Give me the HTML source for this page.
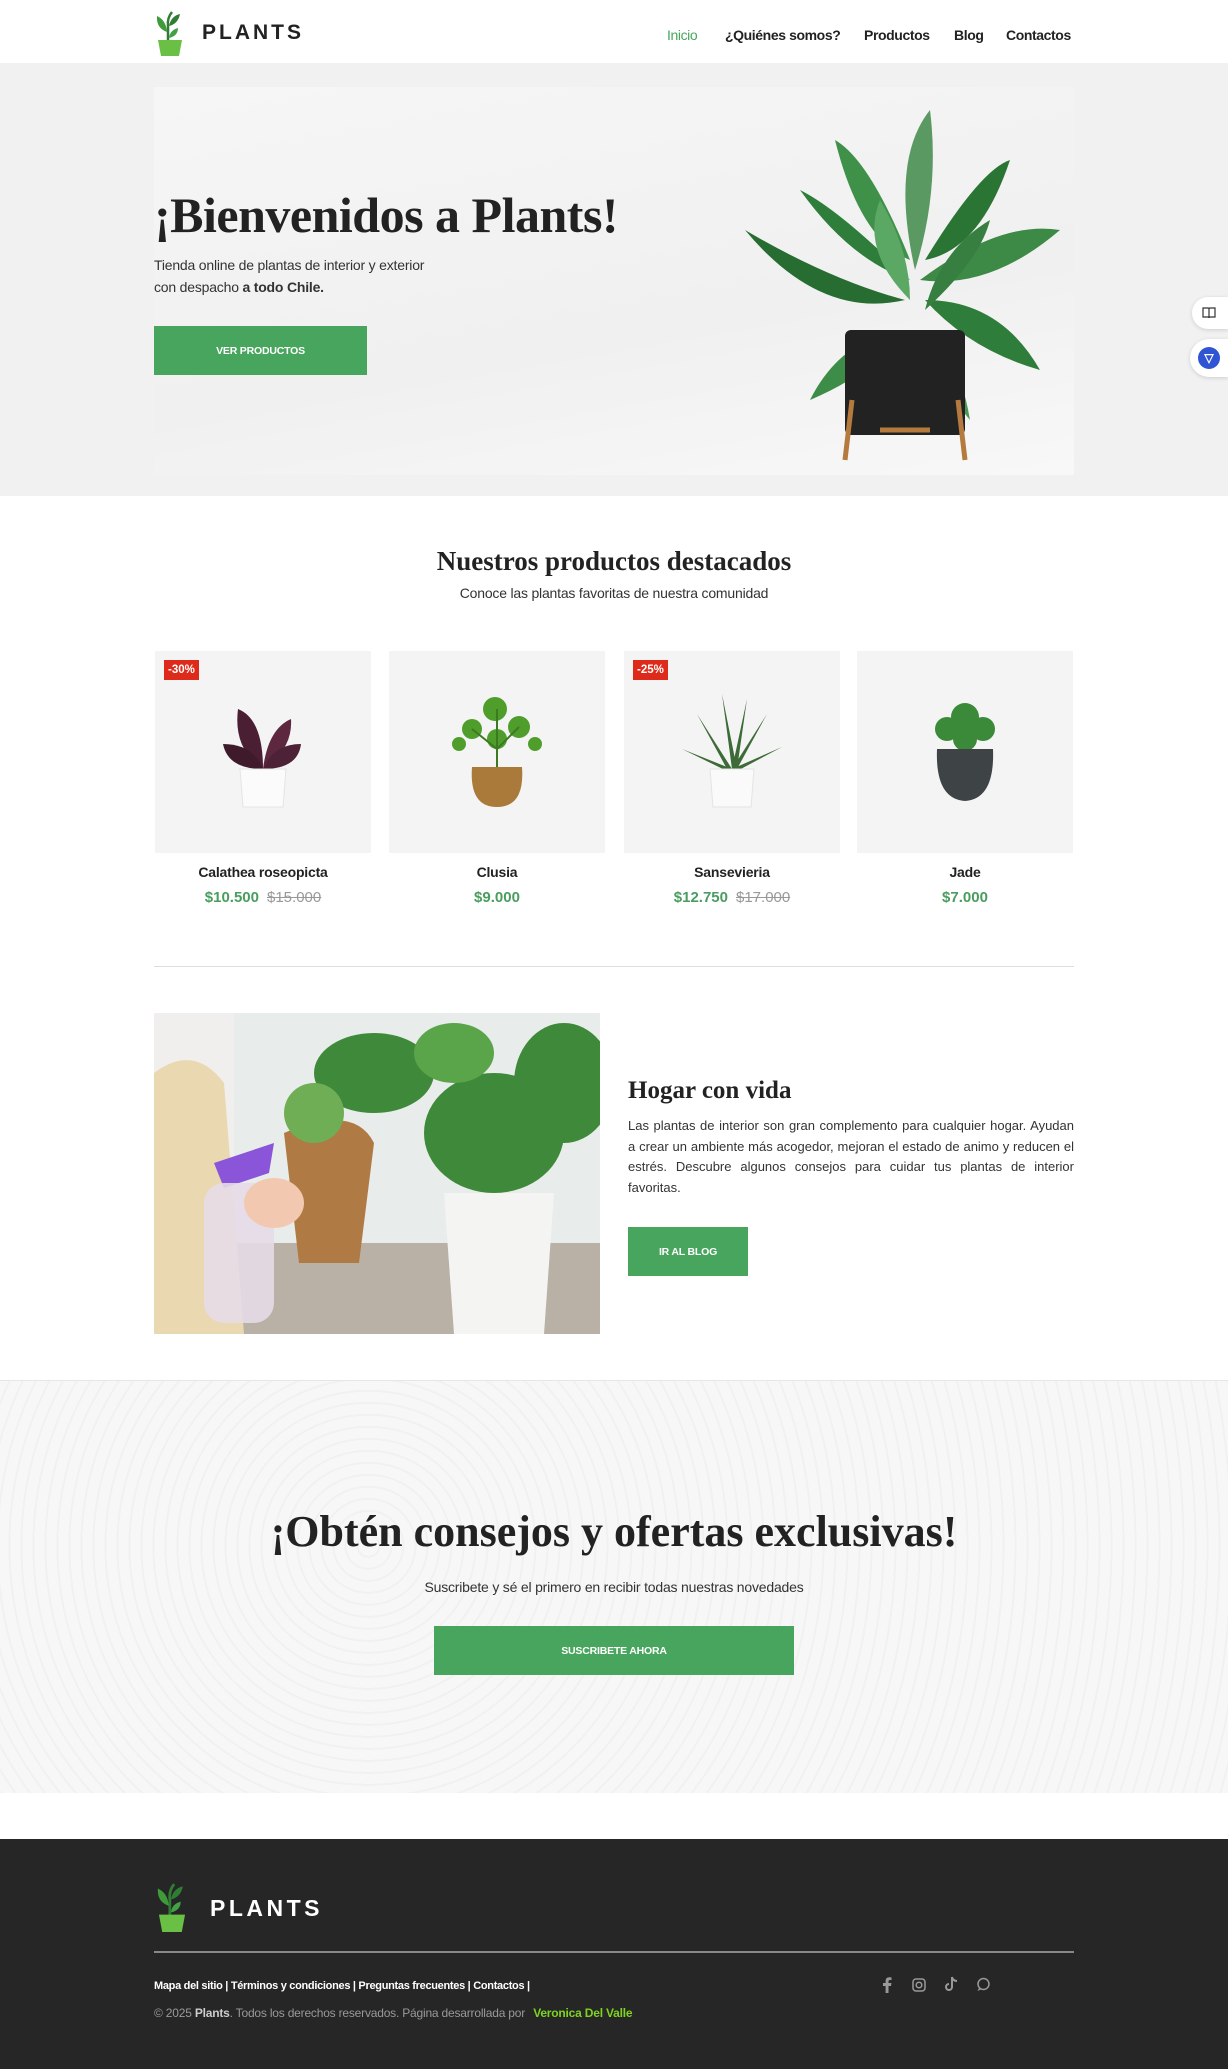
<!DOCTYPE html>
<html><head><meta charset="utf-8">
<style>
*{margin:0;padding:0;box-sizing:border-box}
body{width:1228px;height:2069px;font-family:"Liberation Sans",sans-serif;color:#222;background:#fff;position:relative;overflow:hidden}
.abs{position:absolute}
.nav a{position:absolute;top:27px;font-size:14px;font-weight:bold;color:#222;text-decoration:none;letter-spacing:-.4px}
.serif{font-family:"Liberation Serif",serif;font-weight:bold}
.btn{position:absolute;background:#48a55e;color:#fff;font-size:10.5px;font-weight:bold;display:flex;align-items:center;justify-content:center;letter-spacing:-.2px}
.card{position:absolute;top:651px;width:216px;height:202px;background:#f4f4f4}
.badge{position:absolute;left:9px;top:9px;background:#dd2a1b;color:#fff;font-size:11.5px;font-weight:bold;padding:4px 4px}
.pname{position:absolute;top:864px;width:216px;text-align:center;font-size:14px;font-weight:bold;letter-spacing:-.2px}
.price{position:absolute;top:889px;width:216px;text-align:center;font-size:15px;font-weight:bold;color:#4a9d5f}
.price s{color:#999;font-weight:normal;margin-left:8px}
</style></head><body>
<svg class="abs" style="left:154px;top:10px" width="32" height="46" viewBox="0 0 32 46"><path d="M14 40 L14 16 Q13 8 18 2" stroke="#2e7d32" stroke-width="2.5" fill="none"/><path d="M13 22 Q2 18 3 6 Q12 10 13 22Z" fill="#3f9b3a"/><path d="M15 16 Q24 14 26 4 Q17 6 15 16Z" fill="#2e7d32"/><path d="M15 28 Q24 26 24 18 Q16 20 15 28Z" fill="#43a047"/><path d="M4 30 H28 L25 46 H7Z" fill="#6abf45"/></svg>
<div class="abs" style="left:202px;top:21px;font-size:21px;font-weight:bold;letter-spacing:3px;color:#222">PLANTS</div>
<div class="nav">
<a style="left:667px;color:#48a55e;font-weight:normal">Inicio</a>
<a style="left:725px">¿Quiénes somos?</a>
<a style="left:864px">Productos</a>
<a style="left:954px">Blog</a>
<a style="left:1006px">Contactos</a>
</div>
<div class="abs" style="left:0;top:63px;width:1228px;height:433px;background:#f1f1f1"></div>
<div class="abs" style="left:154px;top:87px;width:920px;height:388px;background:linear-gradient(170deg,#f6f6f6 0%,#f0f0f0 60%,#f8f8f8 100%)"></div>
<svg class="abs" style="left:740px;top:100px" width="330" height="370" viewBox="0 0 330 370">
<g fill="#2f7d3a">
<path d="M175 170 Q150 60 190 10 Q200 90 175 170Z" fill="#5a9a62"/>
<path d="M170 180 Q100 110 60 90 Q110 160 170 180Z"/>
<path d="M180 180 Q260 120 320 130 Q250 190 180 180Z" fill="#3c8a45"/>
<path d="M165 200 Q90 180 5 130 Q80 220 165 200Z" fill="#276d31"/>
<path d="M185 200 Q260 200 300 270 Q230 250 185 200Z"/>
<path d="M170 160 Q130 60 95 40 Q120 140 170 160Z" fill="#3f9149"/>
<path d="M185 160 Q240 70 270 60 Q240 150 185 160Z" fill="#2a7434"/>
<path d="M160 230 Q100 240 70 300 Q140 270 160 230Z" fill="#3d8c47"/>
<path d="M190 230 Q220 260 230 320 Q195 280 190 230Z" fill="#4a9a54"/>
<path d="M170 200 Q120 150 140 100 Q170 150 170 200Z" fill="#5aa863"/>
<path d="M185 210 Q240 160 250 120 Q200 150 185 210Z" fill="#367f40"/>
</g>
<rect x="105" y="230" width="120" height="105" rx="6" fill="#222"/>
<path d="M112 300 L105 360 M218 300 L225 360 M140 330 L190 330" stroke="#b57a3e" stroke-width="5"/>
</svg>
<div class="abs serif" style="left:154px;top:186px;font-size:50px;color:#222;letter-spacing:-.5px">¡Bienvenidos a Plants!</div>
<div class="abs" style="left:154px;top:254px;font-size:14px;line-height:22px;color:#333;letter-spacing:-.2px">Tienda online de plantas de interior y exterior<br>con despacho <b>a todo Chile.</b></div>
<div class="btn" style="left:154px;top:326px;width:213px;height:49px">VER PRODUCTOS</div>
<div class="abs" style="left:1192px;top:297px;width:36px;height:32px;background:#fff;border-radius:16px 0 0 16px;box-shadow:0 1px 4px rgba(0,0,0,.15)"><svg style="position:absolute;left:10px;top:10px" width="14" height="12" viewBox="0 0 14 12"><path d="M1 1 H6 Q7 1 7 2 V11 Q7 10 6 10 H1Z M13 1 H8 Q7 1 7 2 V11 Q7 10 8 10 H13Z" fill="none" stroke="#333" stroke-width="1.2"/></svg></div>
<div class="abs" style="left:1190px;top:339px;width:38px;height:38px;background:#fff;border-radius:19px 0 0 19px;box-shadow:0 1px 4px rgba(0,0,0,.15)"><div style="margin:8px 0 0 8px;width:22px;height:22px;border-radius:50%;background:#2f55d4;color:#fff;font-size:12px;text-align:center;line-height:22px;font-weight:bold">▽</div></div>
<div class="abs serif" style="left:0;width:1228px;top:546px;text-align:center;font-size:27px">Nuestros productos destacados</div>
<div class="abs" style="left:0;width:1228px;top:585px;text-align:center;font-size:14px;color:#333;letter-spacing:-.2px">Conoce las plantas favoritas de nuestra comunidad</div>

<div class="card" style="left:155px"><div class="badge">-30%</div>
<svg style="position:absolute;left:68px;top:38px" width="80" height="120" viewBox="0 0 80 120"><path d="M40 80 Q10 60 15 20 Q40 30 40 80Z" fill="#4b1f33"/><path d="M40 80 Q70 60 68 30 Q45 40 40 80Z" fill="#5d2740"/><path d="M40 80 Q5 80 0 55 Q30 55 40 80Z" fill="#3e1a2a"/><path d="M40 80 Q75 80 78 55 Q50 55 40 80Z" fill="#4e2236"/><path d="M17 80 H63 L60 118 H20Z" fill="#fbfbfb" stroke="#e4e4e4"/></svg></div>
<div class="card" style="left:389px">
<svg style="position:absolute;left:58px;top:38px" width="100" height="120" viewBox="0 0 100 120"><g fill="#4f9e2c"><circle cx="48" cy="20" r="12"/><circle cx="25" cy="40" r="10"/><circle cx="72" cy="38" r="11"/><circle cx="12" cy="55" r="7"/><circle cx="88" cy="55" r="7"/><circle cx="50" cy="50" r="10"/></g><path d="M50 80 V20 M50 60 L25 40 M50 60 L72 38" stroke="#3c7a22" stroke-width="2"/><path d="M25 78 H75 Q78 118 50 118 Q22 118 25 78Z" fill="#a97a3a"/></svg></div>
<div class="card" style="left:624px"><div class="badge">-25%</div>
<svg style="position:absolute;left:58px;top:38px" width="100" height="120" viewBox="0 0 100 120"><g fill="#3d6b37"><path d="M50 80 L40 5 L55 80Z"/><path d="M50 80 L15 25 L45 80Z"/><path d="M50 80 L85 25 L55 80Z"/><path d="M50 80 L0 60 L45 82Z"/><path d="M50 80 L100 58 L55 82Z"/><path d="M50 80 L65 10 L55 80Z"/></g><path d="M28 80 H72 L69 118 H31Z" fill="#fafafa" stroke="#e4e4e4"/></svg></div>
<div class="card" style="left:857px">
<svg style="position:absolute;left:68px;top:48px" width="80" height="110" viewBox="0 0 80 110"><g fill="#3a8a3a"><circle cx="40" cy="18" r="14"/><circle cx="22" cy="30" r="12"/><circle cx="58" cy="30" r="12"/><circle cx="40" cy="40" r="12"/></g><path d="M12 50 H68 Q70 100 40 102 Q10 100 12 50Z" fill="#3e4346"/></svg></div>

<div class="pname" style="left:155px">Calathea roseopicta</div>
<div class="price" style="left:155px">$10.500<s>$15.000</s></div>
<div class="pname" style="left:389px">Clusia</div>
<div class="price" style="left:389px">$9.000</div>
<div class="pname" style="left:624px">Sansevieria</div>
<div class="price" style="left:624px">$12.750<s>$17.000</s></div>
<div class="pname" style="left:857px">Jade</div>
<div class="price" style="left:857px">$7.000</div>
<div class="abs" style="left:154px;top:966px;width:920px;height:1px;background:#ddd"></div>
<svg class="abs" style="left:154px;top:1013px" width="446" height="321" viewBox="0 0 446 321">
<rect width="446" height="321" fill="#e8ecea"/>
<rect x="0" y="230" width="446" height="91" fill="#b9b1a6"/>
<rect x="0" y="0" width="80" height="321" fill="#f0efed"/>
<path d="M0 60 Q40 30 70 70 L90 321 H0Z" fill="#ead9b0"/>
<path d="M130 120 Q200 90 220 130 L205 250 H145Z" fill="#b07a44"/>
<path d="M290 180 H400 L390 321 H300Z" fill="#f4f4f2"/>
<g fill="#3f8a3a"><ellipse cx="340" cy="120" rx="70" ry="60"/><ellipse cx="220" cy="60" rx="60" ry="40"/><ellipse cx="410" cy="70" rx="50" ry="60"/><ellipse cx="300" cy="40" rx="40" ry="30" fill="#5aa54a"/><ellipse cx="160" cy="100" rx="30" ry="30" fill="#6fae55"/></g>
<path d="M60 150 L120 130 L115 160 L70 175Z" fill="#8a55d8"/>
<rect x="50" y="170" width="70" height="140" rx="20" fill="#e6dbe8" opacity=".9"/>
<ellipse cx="120" cy="190" rx="30" ry="25" fill="#f2c9b0"/>
</svg>
<div class="abs serif" style="left:628px;top:1077px;font-size:25px">Hogar con vida</div>
<div class="abs" style="left:628px;top:1116px;width:446px;font-size:13px;line-height:20.6px;color:#333;text-align:justify">Las plantas de interior son gran complemento para cualquier hogar. Ayudan a crear un ambiente más acogedor, mejoran el estado de animo y reducen el estrés. Descubre algunos consejos para cuidar tus plantas de interior favoritas.</div>
<div class="btn" style="left:628px;top:1227px;width:120px;height:49px">IR AL BLOG</div>
<div class="abs" style="left:0;top:1380px;width:1228px;height:413px;background:#f6f6f6;border-top:1px solid #e6e6e6;background-image:repeating-radial-gradient(circle at 30% 40%,#f7f7f7 0 10px,#f1f1f1 10px 12px)"></div>
<div class="abs serif" style="left:0;width:1228px;top:1506px;text-align:center;font-size:44px">¡Obtén consejos y ofertas exclusivas!</div>
<div class="abs" style="left:0;width:1228px;top:1579px;text-align:center;font-size:14px;color:#333;letter-spacing:-.2px">Suscribete y sé el primero en recibir todas nuestras novedades</div>
<div class="btn" style="left:434px;top:1626px;width:360px;height:49px">SUSCRIBETE AHORA</div>
<div class="abs" style="left:0;top:1839px;width:1228px;height:230px;background:#262626"></div>
<svg class="abs" style="left:154px;top:1882px" width="36" height="50" viewBox="0 0 32 46"><path d="M14 40 L14 16 Q13 8 18 2" stroke="#2e7d32" stroke-width="2.5" fill="none"/><path d="M13 22 Q2 18 3 6 Q12 10 13 22Z" fill="#3f9b3a"/><path d="M15 16 Q24 14 26 4 Q17 6 15 16Z" fill="#2e7d32"/><path d="M15 28 Q24 26 24 18 Q16 20 15 28Z" fill="#43a047"/><path d="M4 30 H28 L25 46 H7Z" fill="#6abf45"/></svg>
<div class="abs" style="left:210px;top:1895px;font-size:23px;font-weight:bold;letter-spacing:3.5px;color:#fff">PLANTS</div>
<div class="abs" style="left:154px;top:1951px;width:920px;height:2px;background:#888"></div>
<div class="abs" style="left:154px;top:1980px;font-size:11px;font-weight:bold;color:#fff;letter-spacing:-.3px">Mapa del sitio | Términos y condiciones | Preguntas frecuentes | Contactos |</div>
<div class="abs" style="left:154px;top:2006px;font-size:12px;color:#999;letter-spacing:-.2px">© 2025 <b style="color:#ccc">Plants</b>. Todos los derechos reservados. Página desarrollada por <b style="color:#7ed321;margin-left:5px">Veronica Del Valle</b></div>
<svg class="abs" style="left:882px;top:1977px" width="10" height="16" viewBox="0 0 10 16"><path d="M6.5 16 V9 H9 L9.4 6 H6.5 V4.3 Q6.5 3 8 3 H9.5 V0.4 Q8.5 0.2 7.3 0.2 Q3.6 0.2 3.6 4 V6 H1 V9 H3.6 V16Z" fill="#999"/></svg>
<svg class="abs" style="left:912px;top:1978px" width="14" height="14" viewBox="0 0 14 14"><rect x="1" y="1" width="12" height="12" rx="3" fill="none" stroke="#999" stroke-width="1.5"/><circle cx="7" cy="7" r="2.8" fill="none" stroke="#999" stroke-width="1.5"/></svg>
<svg class="abs" style="left:945px;top:1976px" width="14" height="16" viewBox="0 0 14 16"><path d="M7 1 V11 A3 3 0 1 1 4 8 M7 1 Q8 5 12 5" fill="none" stroke="#999" stroke-width="2"/></svg>
<svg class="abs" style="left:976px;top:1977px" width="15" height="15" viewBox="0 0 15 15"><circle cx="7.5" cy="7" r="5.5" fill="none" stroke="#999" stroke-width="1.5"/><path d="M3 11 L1.5 14 L5 12.5" fill="#999"/></svg>
</body></html>
